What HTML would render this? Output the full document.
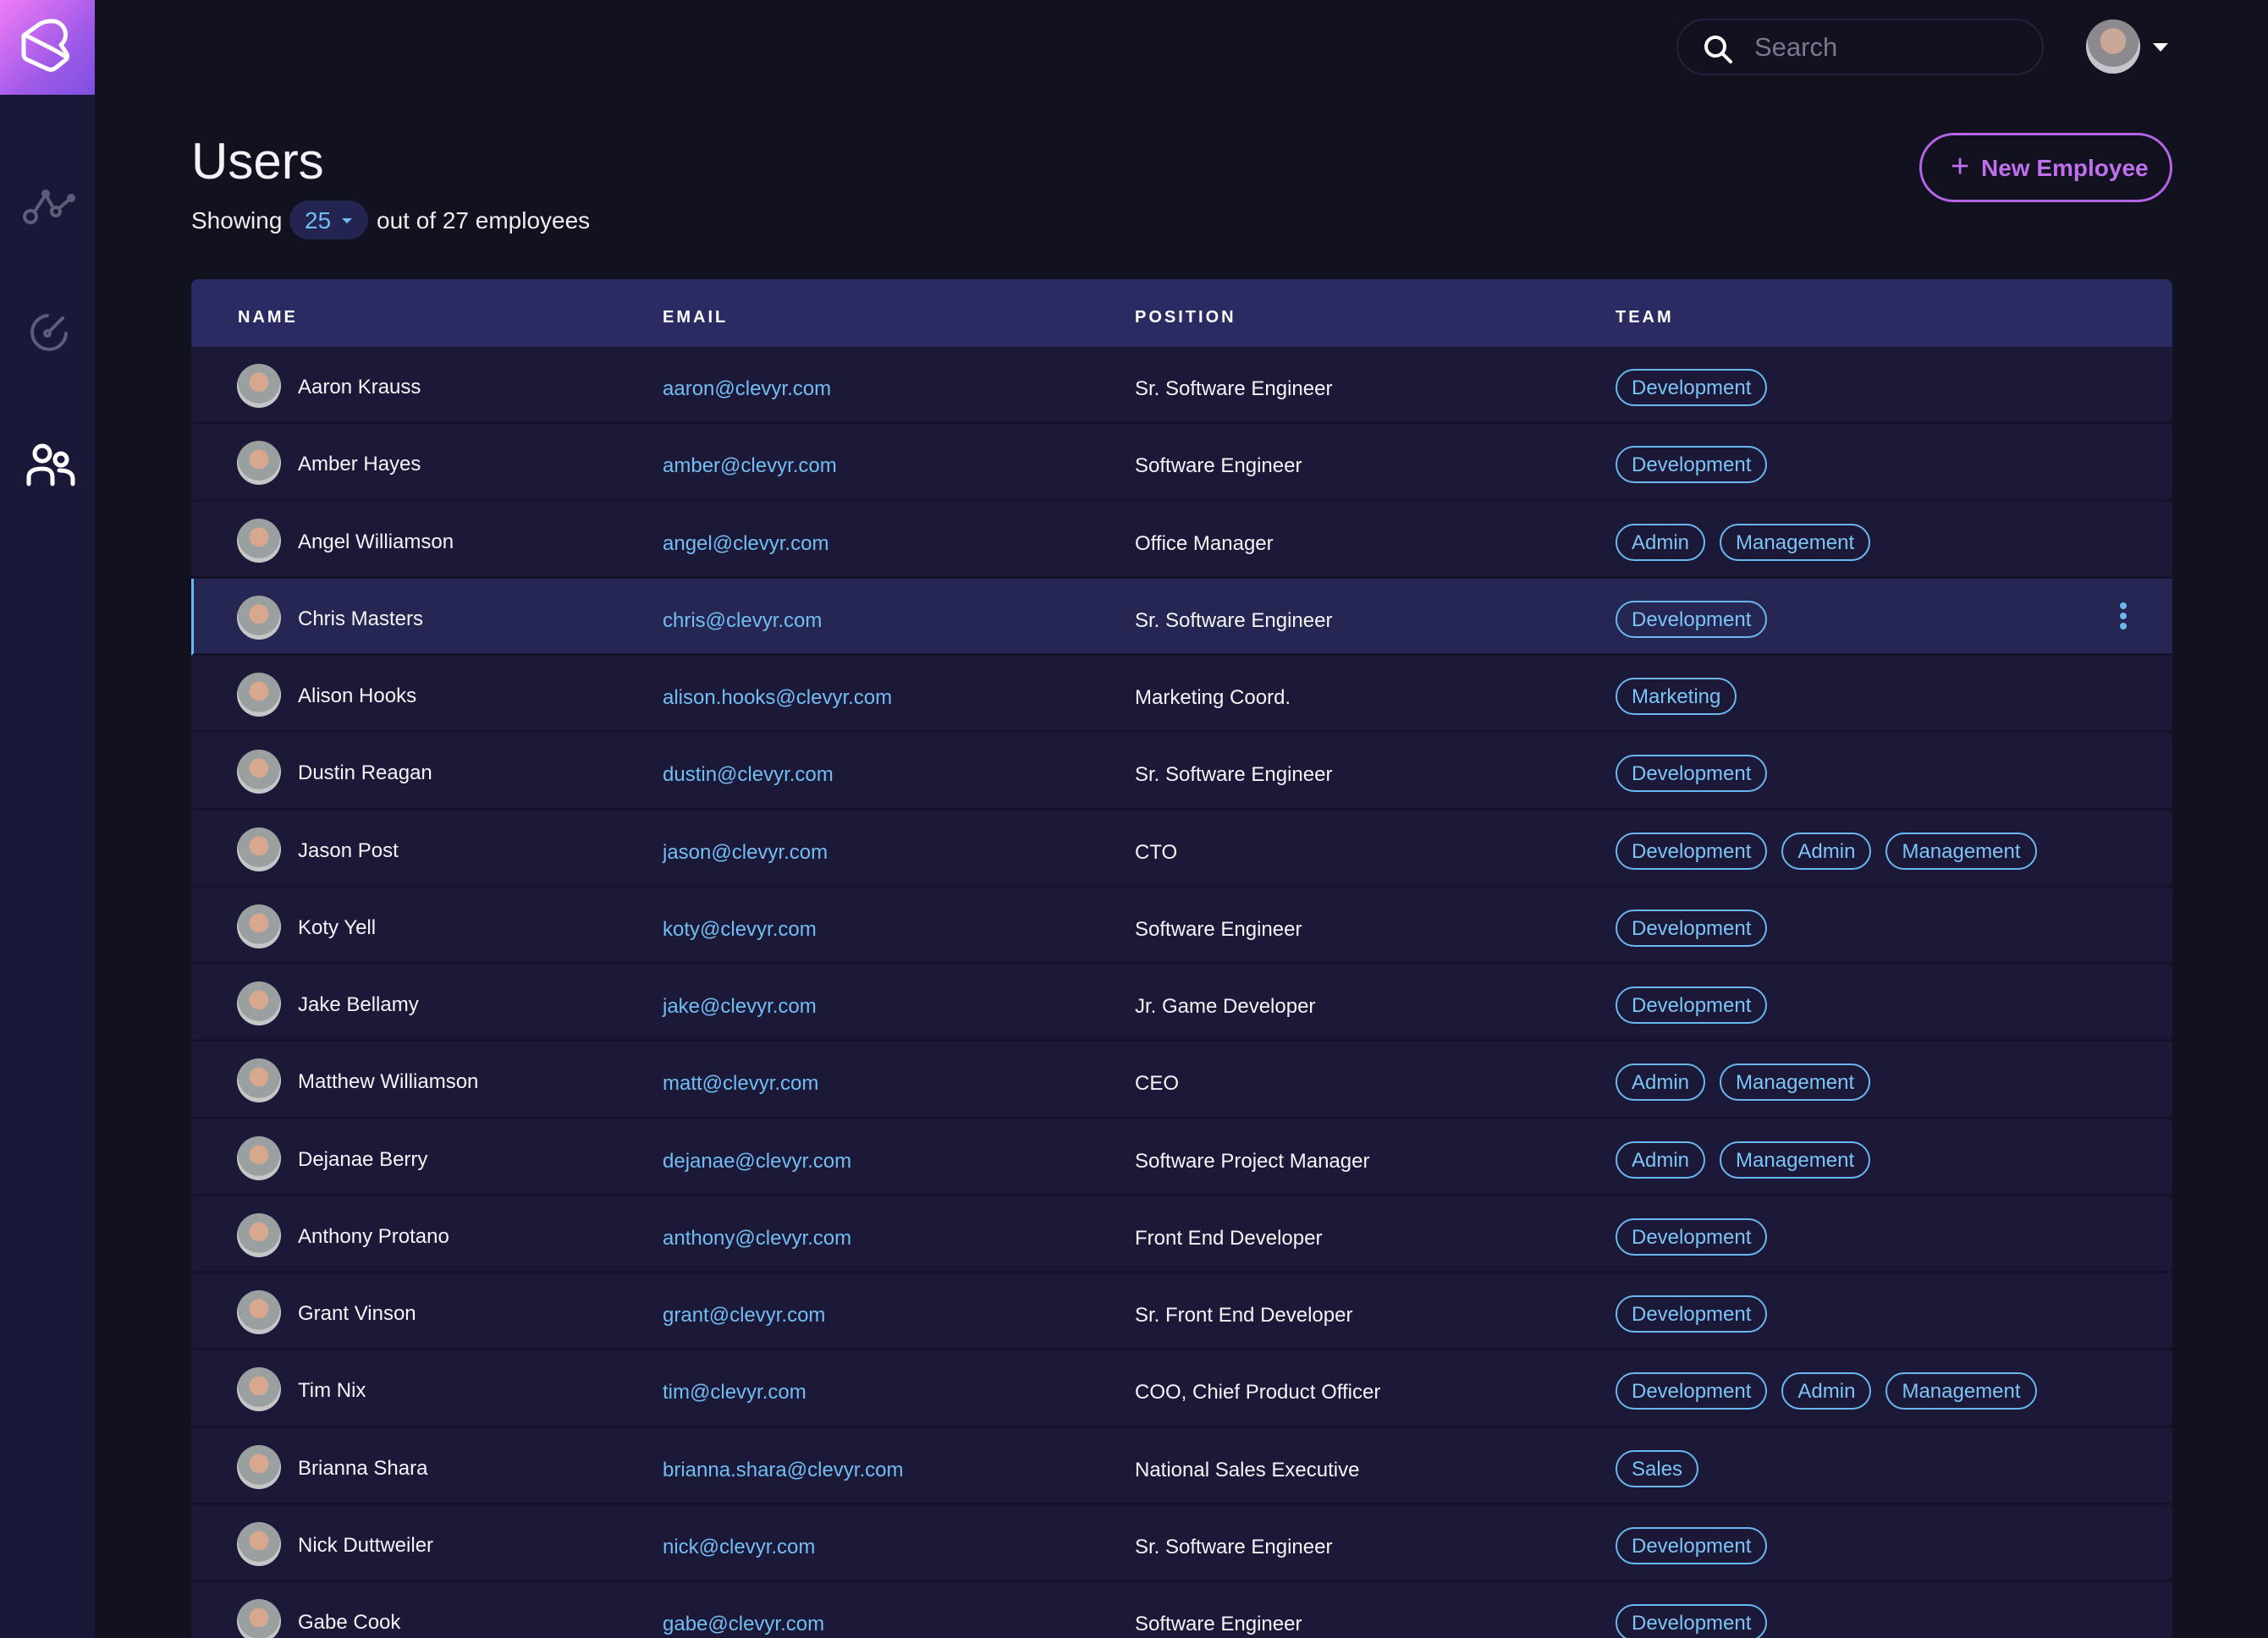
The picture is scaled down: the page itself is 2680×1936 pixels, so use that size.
<!DOCTYPE html>
<html><head><meta charset="utf-8"><style>
*{margin:0;padding:0;box-sizing:border-box}
html,body{width:2680px;height:1936px;overflow:hidden}
body{background:#12111f;font-family:"Liberation Sans",sans-serif;color:#fff;position:relative}
.side{position:absolute;left:0;top:0;width:112px;height:1936px;background:#1a1838}
.logo{position:absolute;left:0;top:0;width:112px;height:112px;background:linear-gradient(135deg,#f07cf7 0%,#a05ae8 60%,#7e4fe0 100%)}
.search{position:absolute;left:1981px;top:22px;width:434px;height:67px;border:2px solid #23213f;border-radius:34px;background:#12111f}
.search span{position:absolute;left:90px;top:14px;font-size:31px;color:#7a7890}
.av{position:absolute;left:2465px;top:23px;width:64px;height:64px;border-radius:50%;background:radial-gradient(circle at 50% 40%,#c9a89a 0 30%,#8c8a8e 31% 60%,#c7c5cb 61%)}
.caret{position:absolute;left:2544px;top:51px;border-left:9px solid transparent;border-right:9px solid transparent;border-top:10px solid #fff}
h1{position:absolute;left:226px;top:156px;font-size:60px;font-weight:normal;color:#f2f2f8}
.show{position:absolute;left:226px;top:245px;font-size:28px;color:#eee}
.pill{position:absolute;left:342px;top:237px;width:93px;height:46px;border-radius:23px;background:#232550}
.pill span{position:absolute;left:18px;top:8px;font-size:28px;color:#72bdf2}
.pill i{position:absolute;left:62px;top:21px;border-left:6px solid transparent;border-right:6px solid transparent;border-top:6px solid #72bdf2}
.show2{position:absolute;left:445px;top:245px;font-size:28px;color:#eee}
.btn{position:absolute;left:2268px;top:157px;width:299px;height:82px;border:3px solid #b765e8;border-radius:41px}
.btn span{position:absolute;left:70px;top:23px;font-size:28px;font-weight:bold;color:#c070ee}
.btn b{position:absolute;left:34px;top:22px;font-size:38px;color:#c070ee;font-weight:normal;line-height:30px}
.thead{position:absolute;left:226px;top:330px;width:2341px;height:80px;background:#2a2b62;border-radius:8px 8px 0 0}
.th{position:absolute;top:34px;font-size:20px;font-weight:bold;letter-spacing:3px;color:#fff}
.row{position:absolute;left:226px;width:2341px;height:91.25px;background:#1b1838;border-bottom:3px solid #15132b}
.row.hl{background:#262652;border-left:3px solid #6ab8f0}
.ph{position:absolute;left:54px;top:20px;width:52px;height:52px;border-radius:50%;background:radial-gradient(circle at 50% 42%,#d8a88e 0 28%,#9aa0a0 29% 62%,#c4c6c8 63%)}
.nm{position:absolute;left:126px;top:34px;font-size:24px;color:#f4f4f8}
.em{position:absolute;left:557px;top:36px;font-size:24px;color:#72bdf2}
.po{position:absolute;left:1115px;top:36px;font-size:24px;color:#f4f4f8}
.tags{position:absolute;left:1683px;top:26px;display:flex;gap:17px}
.tag{height:44px;border:2px solid #6ab8f0;border-radius:22px;padding:0 17px;font-size:24px;line-height:41px;color:#7cc4f5}
.kb{position:absolute;left:2276px;top:28px;width:8px}
.kb i{display:block;width:8px;height:8px;border-radius:50%;background:#6ab8f0;margin-bottom:4px}
</style></head><body>
<div class="side">
<div class="logo"><svg width="112" height="112" viewBox="0 0 112 112"><g fill="none" stroke="#fff" stroke-width="5" stroke-linejoin="round" stroke-linecap="round"><path d="M28 42 L46 29 Q52 25 60 25 A16 16 0 0 1 72 53 L78 62 Q82 68 76 72 L66 80 Q61 84 55 81 L31 70 Q28 68 28 64 Z"/><path d="M29 41 L66 60 L76 66"/></g></svg></div>
<svg style="position:absolute;left:26px;top:222px" width="64" height="46" viewBox="0 0 64 46"><g fill="none" stroke="#5e5c78" stroke-width="4"><circle cx="10" cy="34" r="7"/><circle cx="40" cy="28" r="5"/><path d="M15 28 L28 8 L37 24 M44 24 L58 12"/><circle cx="28" cy="7" r="3" fill="#5e5c78"/><circle cx="58" cy="12" r="3" fill="#5e5c78"/></g></svg>
<svg style="position:absolute;left:34px;top:368px" width="50" height="50" viewBox="0 0 50 50"><g fill="none" stroke="#5e5c78" stroke-width="4" stroke-linecap="round"><path d="M22 5 A20 20 0 1 0 44 26"/><path d="M24 24 L40 8"/><circle cx="22" cy="26" r="3"/></g></svg>
<svg style="position:absolute;left:30px;top:524px" width="60" height="52" viewBox="0 0 60 52"><g fill="none" stroke="#fff" stroke-width="5" stroke-linecap="round"><circle cx="20" cy="12" r="9"/><circle cx="42" cy="19" r="7"/><path d="M4 48 V40 Q4 30 20 30 Q32 30 32 40 V48"/><path d="M40 32 Q56 32 56 42 V48"/></g></svg>
</div>
<div class="search"><svg style="position:absolute;left:28px;top:15px" width="40" height="40" viewBox="0 0 40 40"><circle cx="16" cy="16" r="11" fill="none" stroke="#fff" stroke-width="4"/><path d="M24 24 L34 34" stroke="#fff" stroke-width="4" stroke-linecap="round"/></svg><span>Search</span></div>
<div class="av"></div><div class="caret"></div>
<h1>Users</h1>
<div class="show">Showing</div>
<div class="pill"><span>25</span><i></i></div>
<div class="show2">out of 27 employees</div>
<div class="btn"><b>+</b><span>New Employee</span></div>
<div class="thead"><div class="th" style="left:55px">NAME</div><div class="th" style="left:557px">EMAIL</div><div class="th" style="left:1115px">POSITION</div><div class="th" style="left:1683px">TEAM</div></div>
<div id="rows"></div>
<script>
var d=[["Aaron Krauss","aaron@clevyr.com","Sr. Software Engineer",["Development"]],
["Amber Hayes","amber@clevyr.com","Software Engineer",["Development"]],
["Angel Williamson","angel@clevyr.com","Office Manager",["Admin","Management"]],
["Chris Masters","chris@clevyr.com","Sr. Software Engineer",["Development"]],
["Alison Hooks","alison.hooks@clevyr.com","Marketing Coord.",["Marketing"]],
["Dustin Reagan","dustin@clevyr.com","Sr. Software Engineer",["Development"]],
["Jason Post","jason@clevyr.com","CTO",["Development","Admin","Management"]],
["Koty Yell","koty@clevyr.com","Software Engineer",["Development"]],
["Jake Bellamy","jake@clevyr.com","Jr. Game Developer",["Development"]],
["Matthew Williamson","matt@clevyr.com","CEO",["Admin","Management"]],
["Dejanae Berry","dejanae@clevyr.com","Software Project Manager",["Admin","Management"]],
["Anthony Protano","anthony@clevyr.com","Front End Developer",["Development"]],
["Grant Vinson","grant@clevyr.com","Sr. Front End Developer",["Development"]],
["Tim Nix","tim@clevyr.com","COO, Chief Product Officer",["Development","Admin","Management"]],
["Brianna Shara","brianna.shara@clevyr.com","National Sales Executive",["Sales"]],
["Nick Duttweiler","nick@clevyr.com","Sr. Software Engineer",["Development"]],
["Gabe Cook","gabe@clevyr.com","Software Engineer",["Development"]]];
var h="";
d.forEach(function(r,i){
var hl=i==3;
h+='<div class="row'+(hl?' hl':'')+'" style="top:'+(410+i*91.25)+'px"><div class="ph" style="'+(hl?'left:51px':'')+'"></div><div class="nm" style="'+(hl?'left:123px':'')+'">'+r[0]+'</div><div class="em" style="'+(hl?'left:554px':'')+'">'+r[1]+'</div><div class="po" style="'+(hl?'left:1112px':'')+'">'+r[2]+'</div><div class="tags" style="'+(hl?'left:1680px':'')+'">'+r[3].map(function(t){return '<div class="tag">'+t+'</div>'}).join('')+'</div>'+(hl?'<div class="kb"><i></i><i></i><i></i></div>':'')+'</div>';
});
document.getElementById("rows").innerHTML=h;
</script>
</body></html>
